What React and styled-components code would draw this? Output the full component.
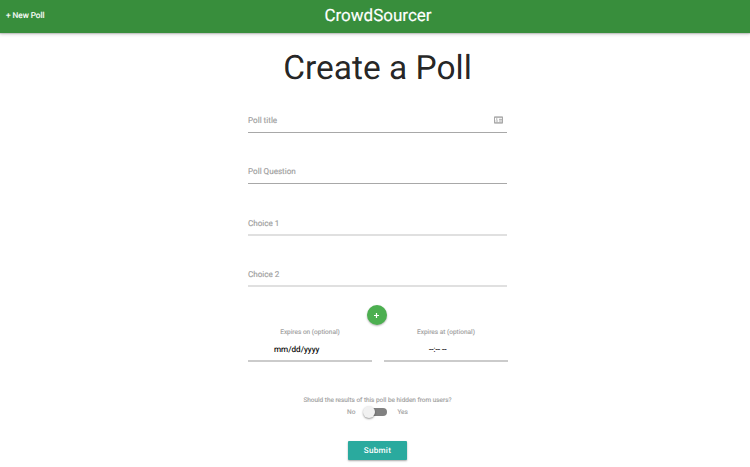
import React from 'react';
import styled, { createGlobalStyle } from 'styled-components';

const Global = createGlobalStyle`
  * { box-sizing: border-box; }
  body { margin: 0; background: #fff; font-family: Roboto, sans-serif; color: rgba(0,0,0,.87); overflow: hidden; text-rendering: geometricPrecision; }
  button { text-rendering: inherit; }
`;
const Page = styled.div`height: 467px; display: flex; flex-direction: column;`;
const Nav = styled.nav`
  height: 33px; flex: none; background: #388e3c; color: #fff;
  display: grid; grid-template-columns: 1fr auto 1fr; align-items: center; padding: 0 0 0 6px;
  box-shadow: 0 1px 1px rgba(0,0,0,.14), 0 2px 3px rgba(0,0,0,.12);
`;
const NavLink = styled.a`font-size: 8.1px; line-height: 31px; padding-bottom: 2px; -webkit-text-stroke: .2px currentColor;`;
const Brand = styled.span`font-size: 17px; line-height: 31px; -webkit-text-stroke: .15px currentColor;`;
const Form = styled.form`width: 259px; margin-left: 248px; display: flex; flex-direction: column;`;
const Title = styled.h1`margin: 15px 0 0; font-size: 33.5px; font-weight: 400; line-height: 41px; text-align: center; white-space: nowrap;`;
const Field = styled.label`
  height: 24px; margin-top: ${p => p.$gap}px; color: #9e9e9e;
  border-bottom: ${p => p.$soft ? '2px solid #e0e0e0' : '1px solid #a8a8a8'};
  display: flex; justify-content: space-between; font-size: 8.1px; line-height: 22.5px; padding-right: 4px;
  -webkit-text-stroke: .15px currentColor;
`;
const ContactCard = styled.svg`width: 9px; height: 8px; margin-top: 7px;`;
const AddRow = styled.div`display: flex; justify-content: center; margin: 18px 2px 0 0;`;
const AddButton = styled.button`
  width: 20px; height: 20px; padding: 0; border: 0; border-radius: 50%; background: #4caf50; color: #fff;
  display: grid; place-items: center; box-shadow: 0 1px 2px rgba(0,0,0,.3);
`;
const Plus = styled.svg`width: 5px; height: 5px;`;
const Dates = styled.div`display: grid; grid-template-columns: 124px 124px; gap: 12px; margin-top: 2px;`;
const DateField = styled.label`display: block; font-size: 6.5px; line-height: 11px; color: #9e9e9e; text-align: center; -webkit-text-stroke: .12px currentColor;`;
const DateValue = styled.span`
  display: block; height: 24px; border-bottom: 2px solid #cbcbcb; color: #000; font-size: 8.1px; line-height: 23px;
  text-align: left; padding-left: ${p => p.$inset}px;
`;
const Question = styled.p`margin: 33px 0 0; font-size: 6.43px; line-height: 10px; color: #9e9e9e; text-align: center; -webkit-text-stroke: .12px currentColor;`;
const SwitchRow = styled.div`display: flex; justify-content: center; align-items: center; font-size: 6.5px; line-height: 14px; color: #9e9e9e; -webkit-text-stroke: .12px currentColor;`;
const Track = styled.span`width: 23px; height: 8px; border-radius: 8px; background: #818181; margin: 0 10px 0 9px; display: flex; align-items: center;`;
const Thumb = styled.span`flex: none; width: 12px; height: 12px; margin-left: -1px; border-radius: 50%; background: #f1f1f1; box-shadow: 0 1px 2px rgba(0,0,0,.4);`;
const Submit = styled.button`
  align-self: center; width: 59px; height: 19px; margin-top: 22px; padding: 0; border: 0; border-radius: 1px;
  background: #2aaa9e; color: #fff; font: 500 8.1px/19px Roboto, sans-serif; letter-spacing: .25px; box-shadow: 0 1px 2px rgba(0,0,0,.35);
`;

export default function App() {
  return (
    <Page>
      <Global />
      <Nav><NavLink>+ New Poll</NavLink><Brand>CrowdSourcer</Brand></Nav>
      <Form>
        <Title>Create a Poll</Title>
        <Field $gap={20}>Poll title
          <ContactCard viewBox="0 0 9 8" fill="none" stroke="#a8a8a8">
            <path d="M.5 1v6h8V1z" />
            <path d="M0 1.2h9M0 6.8h9M5 3.3h3M5 5h3" />
            <path d="M2.8 2.2v1.7M1.5 5h2.6" />
          </ContactCard>
        </Field>
        <Field $gap={27}>Poll Question</Field>
        <Field $gap={28} $soft>Choice 1</Field>
        <Field $gap={27} $soft>Choice 2</Field>
        <AddRow>
          <AddButton type="button" aria-label="Add choice">
            <Plus viewBox="0 0 5 5" stroke="#fff" strokeWidth="1.2"><path d="M2.5 0v5M0 2.5h5" /></Plus>
          </AddButton>
        </AddRow>
        <Dates>
          <DateField>Expires on (optional)<DateValue $inset={26}>mm/dd/yyyy</DateValue></DateField>
          <DateField>Expires at (optional)<DateValue $inset={45}>--:-- --</DateValue></DateField>
        </Dates>
        <Question>Should the results of this poll be hidden from users?</Question>
        <SwitchRow>No<Track><Thumb /></Track>Yes</SwitchRow>
        <Submit type="button">Submit</Submit>
      </Form>
    </Page>
  );
}
